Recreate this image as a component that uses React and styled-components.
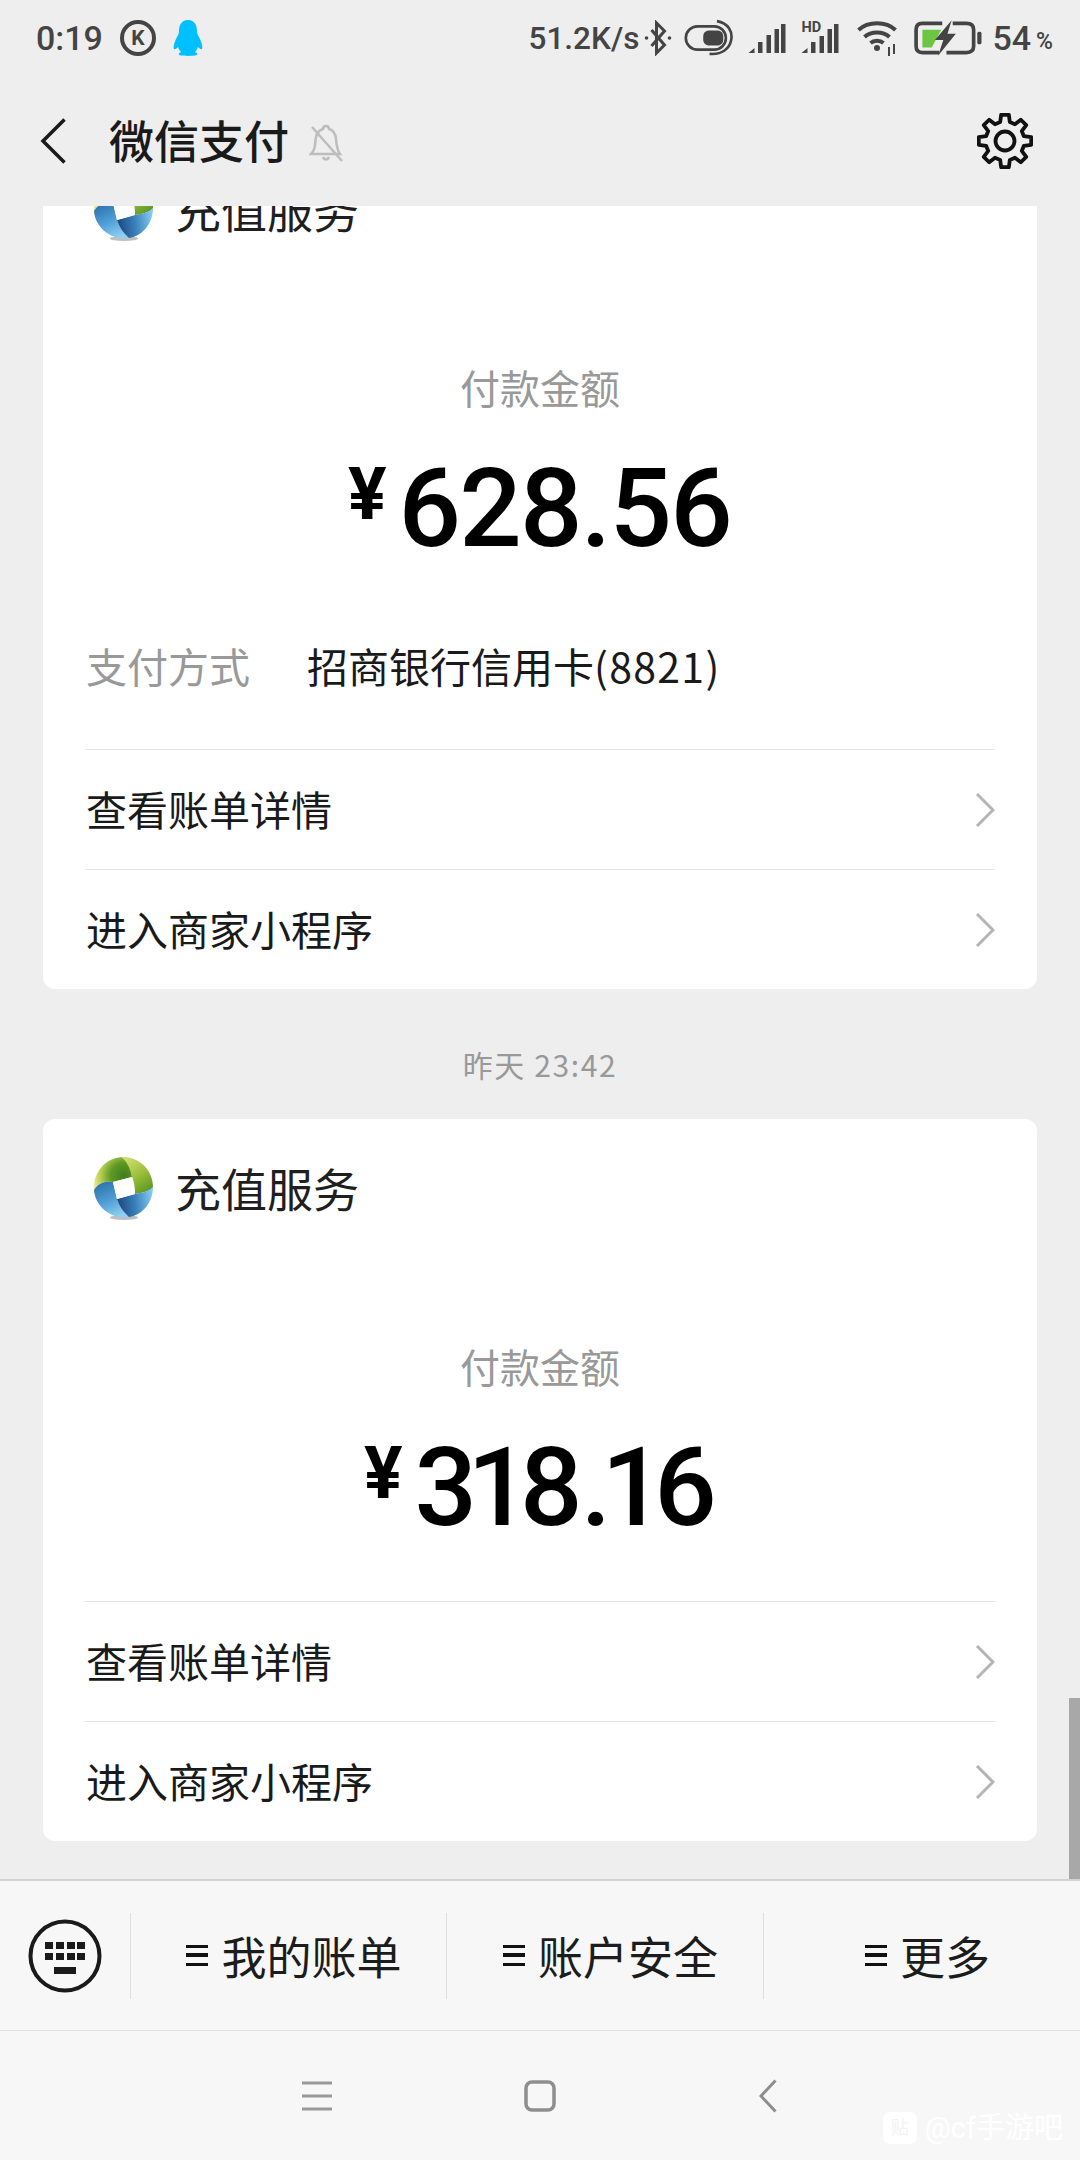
import React from "react";
import styled, { createGlobalStyle } from "styled-components";

const CJK = `"Noto Sans CJK SC", "Noto Sans", sans-serif`;
const LATIN = `Roboto, "Noto Sans CJK SC", sans-serif`;

const Global = createGlobalStyle`
  html, body { margin: 0; padding: 0; background: #eeeeee; }
  * { box-sizing: border-box; }
`;
const Screen = styled.div`
  width: 1080px; height: 2160px; display: flex; flex-direction: column;
  overflow: hidden; background: #eeeeee; font-family: ${CJK}; position: relative;
`;
const TopArea = styled.header`
  flex: none; height: 206px; background: #eeeeee; display: flex; flex-direction: column;
`;
const StatusBar = styled.div`
  height: 76px; padding: 0 27px 0 36px; display: flex; align-items: center;
  justify-content: space-between; color: #444444; font-family: ${LATIN};
  font-weight: 500; font-size: 34px;
`;
const StatusGroup = styled.div`display: flex; align-items: center; gap: ${p => p.$gap || 0}px;`;
const Speed = styled.span`font-size: 31.5px;`;
const KBadge = styled.span`
  width: 36px; height: 36px; border-radius: 50%; border: 4px solid #444444;
  display: flex; align-items: center; justify-content: center; font-size: 21px; font-weight: 700; line-height: 1;
`;
const Percent = styled.span`font-size: 23px; margin-left: 5px; margin-top: 6px;`;
const TitleBar = styled.div`
  height: 130px; display: flex; align-items: center; padding: 0 47px 0 40px;
`;
const Title = styled.h1`
  margin: 0 20px 3px 43px; font-size: 45px; line-height: 60px; font-weight: 500; color: #1a1a1a;
`;
const GearSlot = styled.div`margin-left: auto; display: flex;`;
const Feed = styled.main`flex: none; height: 1673px; overflow: hidden; position: relative;`;
const FeedInner = styled.div`
  margin-top: -66px; padding: 0 43px; display: flex; flex-direction: column;
`;
const Card = styled.section`background: #ffffff; border-radius: 12px; display: flex; flex-direction: column;`;
const CardHeader = styled.div`height: 138px; padding-left: 49px; display: flex; align-items: center; gap: 21px;`;
const CardTitle = styled.div`font-size: 46px; line-height: 60px; color: #1f1f1f; margin-bottom: 2px;`;
const AmountLabel = styled.div`
  margin-top: 79px; text-align: center; font-size: 40px; line-height: 60px; color: #999999;
`;
const Amount = styled.div`
  margin-top: 32px; height: 120px; display: flex; justify-content: center; align-items: center;
  font-family: ${LATIN}; color: #000000; font-weight: 500; font-size: 110px; line-height: 120px;
  letter-spacing: -1.8px; padding-right: 1px;
`;
const Yen = styled.span`
  font-size: 72px; font-weight: 700; line-height: 72px; align-self: flex-start; margin: 10px 12px 0 0; letter-spacing: 0;
`;
const NarrowOne = styled.span`margin: 0 -8px;`;
const MethodRow = styled.div`
  margin: 66px 42px 3px 43px; height: 60px; display: flex; align-items: center; font-size: 41px;
`;
const MethodKey = styled.span`width: 221px; color: #999999;`;
const MethodValue = styled.span`color: #1a1a1a;`;
const Digits = styled.span`letter-spacing: 1.3px;`;
const Rows = styled.div`margin: ${p => p.$top}px 42px 0;`;
const Row = styled.div`
  height: 120px; border-top: 1px solid #e5e5e5; display: flex; align-items: center;
  justify-content: space-between; padding-left: 1px; font-size: 41px; color: #1a1a1a;
`;
const RowLabel = styled.span`margin-bottom: 3px;`;
const TimeLabel = styled.div`
  margin: 55px 0 35px; height: 40px; text-align: center; font-size: 30px; line-height: 40px; color: #999999;
  letter-spacing: 1.6px;
`;
const ScrollThumb = styled.div`
  position: absolute; right: 0; bottom: 0; width: 11px; height: 181px; background: #a8a8a8;
`;
const Menu = styled.nav`
  flex: none; height: 152px; background: #f7f7f7; border-top: 2px solid #d2d2d2;
  border-bottom: 1px solid #e2e2e2; display: grid; grid-template-columns: 130px 316px 317px 1fr; align-items: center;
`;
const KeyboardCell = styled.div`display: flex; justify-content: center;`;
const MenuItem = styled.div`
  height: 86px; border-left: 1px solid #dedede; padding-left: 11px; display: flex; align-items: center;
  justify-content: center; gap: 13px; font-size: 45px; color: #1c1c1c;
`;
const MenuGlyph = styled.span`
  width: 22px; height: 21px; border-top: 3.5px solid #111; border-bottom: 3.5px solid #111; position: relative;
  &::after { content: ""; position: absolute; left: 0; right: 0; top: 5px; height: 3.5px; background: #111; }
`;
const NavBar = styled.div`
  flex: none; height: 129px; background: #f7f7f7; display: flex; align-items: center; justify-content: center; gap: 192px;
  padding-right: 1px; position: relative;
`;
const Watermark = styled.div`
  position: absolute; right: 17px; bottom: 15px; display: flex; align-items: center; gap: 8px;
  color: #ffffff; font-family: ${LATIN}; font-size: 29px; line-height: 34px;
`;
const WatermarkIcon = styled.span`
  width: 34px; height: 32px; border-radius: 7px; background: #ffffff; display: flex; align-items: center;
  justify-content: center; color: #f2f2f2; font-size: 18px;
`;
const NavBackSlot = styled.span`display: flex; margin-left: 11px;`;

const Bluetooth = () => (
  <svg width="30" height="36" viewBox="0 0 27 36" fill="none" stroke="#444" strokeWidth="3" style={{ margin: "0 11px 0 4px" }}>
    <path d="M7 10 L20 25 L12 33 V3 L20 11 L7 26" />
    <circle cx="2" cy="18" r="1.8" fill="#444" stroke="none" />
    <circle cx="25" cy="18" r="1.8" fill="#444" stroke="none" />
  </svg>
);
const Toggle = () => (
  <svg width="49" height="38" viewBox="0 0 46 36" fill="none" stroke="#444" strokeWidth="2.5" style={{ marginRight: 14 }}>
    <rect x="1.5" y="7" width="38" height="22" rx="11" />
    <rect x="18" y="11" width="19" height="14" rx="5" fill="#444" stroke="none" />
    <path d="M31 2 C42 4 46 12 44.5 20 C43 28 36 34 24 33" />
  </svg>
);
const Signal = ({ hd }) => (
  <svg width="40" height="34" viewBox="0 0 37 34" fill="#444" style={{ marginRight: hd ? 16 : 13 }}>
    {hd && <text x="0" y="11" fontFamily="Roboto, sans-serif" fontWeight="700" fontSize="14.5" fill="#444">HD</text>}
    <path d="M0 32 L6 27 V32 Z" />
    <rect x="9.5" y="21" width="4.5" height="11" />
    <rect x="18" y={hd ? 15 : 14} width="4.5" height={hd ? 17 : 18} />
    <rect x="26" y="8" width="4.5" height="24" />
    <rect x="32.5" y="3" width="4.5" height="29" />
  </svg>
);
const Wifi = () => (
  <svg width="42" height="36" viewBox="0 0 40 36" fill="none" stroke="#444" strokeWidth="4" style={{ marginRight: 16 }}>
    <path d="M1.5 10 C11 1 29 1 38.5 10" />
    <path d="M7.5 17 C14 11 26 11 32.5 17" />
    <path d="M13.5 23 C17 20 23 20 26.5 23" />
    <circle cx="20" cy="28" r="3" fill="#444" stroke="none" />
    <path d="M32 27 V36 M37 24 V34" strokeWidth="2" />
  </svg>
);
const Battery = () => (
  <svg width="68" height="36" viewBox="0 0 65 34" fill="none" style={{ marginRight: 10 }}>
    <path d="M27 3 H8 Q2 3 2 9 V25 Q2 31 8 31 H24" stroke="#444" strokeWidth="3.5" />
    <path d="M37 3 H50 Q57 3 57 9 V25 Q57 31 50 31 H31" stroke="#444" strokeWidth="3.5" />
    <path d="M8 9 H26 L17 26 H8 Z" fill="#6cc644" />
    <path d="M36 0 L20 19 H28 L23 34 L40 13 H32 Z" fill="#444" />
    <rect x="60.5" y="11" width="4" height="12" rx="1.5" fill="#444" />
  </svg>
);
const Penguin = () => (
  <svg width="30" height="36" viewBox="0 0 30 36" fill="#00c0ff">
    <path d="M15 0 C8 0 6 6 6 11 C6 14 5 15 3.5 18 C1.5 22 0 27 1 29 C2 30 4 28 5 27 C5.5 29 7 31 8 32 C5 33 5 35 8 35.5 C11 36 19 36 22 35.5 C25 35 25 33 22 32 C23 31 24.5 29 25 27 C26 28 28 30 29 29 C30 27 28.5 22 26.5 18 C25 15 24 14 24 11 C24 6 22 0 15 0 Z" />
  </svg>
);
const Back = () => (
  <svg width="26" height="46" viewBox="0 0 26 46" fill="none" stroke="#1a1a1a" strokeWidth="3.5">
    <path d="M24.5 1.5 L3 23 L24.5 44.5" />
  </svg>
);
const MutedBell = () => (
  <svg width="34" height="38" viewBox="0 0 34 38" fill="none" stroke="#bdbdbd" strokeWidth="2.5" style={{ marginTop: 4 }}>
    <path d="M2 30 C6 26 6 22 6.5 16 C7 10 10 6 14 5 C14 1 20 1 20 5 C24 6 26.5 10 27 15 C27.5 22 28 26 31 30 Z" />
    <path d="M14 33 C15 36 19 36 20 33" />
    <path d="M3 3 L33 37" />
  </svg>
);
const gearPoints = (() => {
  const pts = [];
  const n = 8, R = 26.5, r = 19.5, cx = 28, cy = 28;
  for (let i = 0; i < n; i++) {
    const a = (i * 2 * Math.PI) / n - Math.PI / 2;
    const w1 = 0.145, w2 = 0.25;
    const p = (rad, off) => `${(cx + rad * Math.cos(a + off)).toFixed(2)},${(cy + rad * Math.sin(a + off)).toFixed(2)}`;
    pts.push(p(r, -w2), p(R, -w1), p(R, w1), p(r, w2));
  }
  return pts.join(" ");
})();
const Gear = () => (
  <svg width="56" height="56" viewBox="0 0 56 56" fill="none" stroke="#111" strokeWidth="3.8" strokeLinejoin="round">
    <polygon points={gearPoints} />
    <circle cx="28" cy="28" r="9.5" />
  </svg>
);
const Logo = ({ id }) => (
  <svg width="62" height="64" viewBox="0 0 62 64">
    <defs>
      <radialGradient id={`${id}a`} gradientUnits="userSpaceOnUse" cx="32" cy="20" r="30">
        <stop offset="0" stopColor="#3f7d1c" />
        <stop offset="0.45" stopColor="#5f9a24" />
        <stop offset="0.8" stopColor="#b9cf55" />
        <stop offset="1" stopColor="#eee58c" />
      </radialGradient>
      <linearGradient id={`${id}r`} gradientUnits="userSpaceOnUse" x1="34" y1="4" x2="56" y2="36">
        <stop offset="0" stopColor="#cfdc70" />
        <stop offset="0.5" stopColor="#9cbf3a" />
        <stop offset="1" stopColor="#5b9626" />
      </linearGradient>
      <linearGradient id={`${id}b`} gradientUnits="userSpaceOnUse" x1="12" y1="26" x2="28" y2="60">
        <stop offset="0" stopColor="#2f74ad" />
        <stop offset="0.5" stopColor="#4f9ed6" />
        <stop offset="1" stopColor="#8fd0f2" />
      </linearGradient>
      <linearGradient id={`${id}d`} gradientUnits="userSpaceOnUse" x1="26" y1="44" x2="60" y2="40">
        <stop offset="0" stopColor="#1c4a82" />
        <stop offset="0.5" stopColor="#3b82bd" />
        <stop offset="1" stopColor="#82c9ef" />
      </linearGradient>
    </defs>
    <ellipse cx="32" cy="61.5" rx="14" ry="2.5" fill="#8a8a8a" opacity="0.55" />
    <path d="M2 31 C2 15 15 1 31 1 C36 1 38 6 40 21 L21 26 C13 25 6 27 2 34 Z" fill={`url(#${id}a)`} />
    <path d="M29 1 C47 0 61 14 61 31 C58 35 50 37 43 38 C43 30 42 26 40 21 C38 12 35 5 29 1 Z" fill={`url(#${id}r)`} />
    <path d="M2 34 C6 27 13 25 21 26 L25 43 C27 50 31 56 37 61 C19 64 3 50 2 34 Z" fill={`url(#${id}b)`} />
    <path d="M25 43 L43 38 C50 37 58 35 61 31 C61 46 51 59 37 61 C31 56 27 50 25 43 Z" fill={`url(#${id}d)`} />
    <path d="M21 26 L40 21 L43 38 L25 43 Z" fill="#ffffff" />
  </svg>
);
const Chevron = () => (
  <svg width="20" height="36" viewBox="0 0 20 36" fill="none" stroke="#b4b4b4" strokeWidth="3">
    <path d="M2 2 L18 18 L2 34" />
  </svg>
);
const KeyboardIcon = () => (
  <svg width="74" height="74" viewBox="0 0 74 74" fill="#1a1a1a">
    <circle cx="37" cy="37" r="34.5" fill="none" stroke="#1a1a1a" strokeWidth="4" />
    {[17, 28, 39, 49].map(x => <rect key={x} x={x} y="23" width="8" height="7" />)}
    {[17, 28, 39, 49].map(x => <rect key={x} x={x} y="34" width="8" height="7" />)}
    <rect x="26" y="48" width="22" height="7" />
  </svg>
);
const NavMenu = () => (
  <svg width="30" height="30" viewBox="0 0 30 30" stroke="#999" strokeWidth="3"><path d="M0 2 H30 M0 15 H30 M0 28 H30" /></svg>
);
const NavHome = () => (
  <svg width="32" height="32" viewBox="0 0 32 32" fill="none" stroke="#8e8e8e" strokeWidth="3.5"><rect x="2" y="2" width="28" height="28" rx="6" /></svg>
);
const NavBack = () => (
  <svg width="18" height="34" viewBox="0 0 18 34" fill="none" stroke="#8e8e8e" strokeWidth="3"><path d="M16.5 1.5 L2 17 L16.5 32.5" /></svg>
);

const Payment = ({ id, amount, method, suffix }) => (
  <Card>
    <CardHeader>
      <Logo id={id} />
      <CardTitle>充值服务</CardTitle>
    </CardHeader>
    <AmountLabel>付款金额</AmountLabel>
    <Amount>
      <Yen>¥</Yen>
      <span>{[...amount].map((c, i) => (c === "1" ? <NarrowOne key={i}>1</NarrowOne> : c))}</span>
    </Amount>
    {method && (
      <MethodRow>
        <MethodKey>支付方式</MethodKey>
        <MethodValue>{method}<Digits>{suffix}</Digits></MethodValue>
      </MethodRow>
    )}
    <Rows $top={method ? 51 : 53}>
      <Row><RowLabel>查看账单详情</RowLabel><Chevron /></Row>
      <Row><RowLabel>进入商家小程序</RowLabel><Chevron /></Row>
    </Rows>
  </Card>
);

export default function App() {
  return (
    <Screen>
      <Global />
      <TopArea>
        <StatusBar>
          <StatusGroup $gap={17}>
            <span>0:19</span>
            <KBadge>K</KBadge>
            <Penguin />
          </StatusGroup>
          <StatusGroup>
            <Speed>51.2K/s</Speed>
            <Bluetooth />
            <Toggle />
            <Signal />
            <Signal hd />
            <Wifi />
            <Battery />
            <span>54</span>
            <Percent>%</Percent>
          </StatusGroup>
        </StatusBar>
        <TitleBar>
          <Back />
          <Title>微信支付</Title>
          <MutedBell />
          <GearSlot><Gear /></GearSlot>
        </TitleBar>
      </TopArea>
      <Feed>
        <FeedInner>
          <Payment id="a" amount="628.56" method="招商银行信用卡" suffix="(8821)" />
          <TimeLabel>昨天 23:42</TimeLabel>
          <Payment id="b" amount="318.16" />
        </FeedInner>
        <ScrollThumb />
      </Feed>
      <Menu>
        <KeyboardCell><KeyboardIcon /></KeyboardCell>
        <MenuItem><MenuGlyph />我的账单</MenuItem>
        <MenuItem><MenuGlyph />账户安全</MenuItem>
        <MenuItem><MenuGlyph />更多</MenuItem>
      </Menu>
      <NavBar>
        <NavMenu />
        <NavHome />
        <NavBackSlot><NavBack /></NavBackSlot>
        <Watermark><WatermarkIcon>贴</WatermarkIcon>@cf手游吧</Watermark>
      </NavBar>
    </Screen>
  );
}
